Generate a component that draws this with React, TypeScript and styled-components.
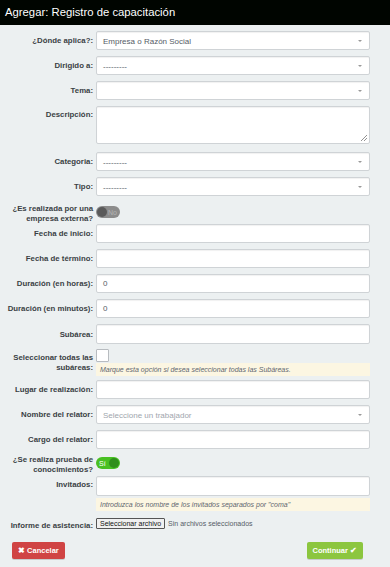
import React, { FC } from "react";
import styled, { createGlobalStyle } from "styled-components";

const GlobalStyle = createGlobalStyle`
  html, body {
    margin: 0;
    padding: 0;
    background: #ecf0f1;
    font-family: "Liberation Sans", Arial, sans-serif;
  }
`;

const StyledPage = styled.div`
  width: 390px;
  min-height: 567px;
  background: #ecf0f1;
`;

const StyledHeader = styled.div`
  height: 25px;
  background: #000500;
  color: #ffffff;
  font-size: 11.3px;
  line-height: 25px;
  padding: 0 5px;
`;

const StyledForm = styled.div`
  display: flex;
  flex-direction: column;
  padding: 6px 20px 0 3px;
`;

const StyledRow = styled.div<{ $gap?: number }>`
  display: grid;
  grid-template-columns: 90px 1fr;
  column-gap: 3px;
  margin-bottom: ${({ $gap }) => $gap ?? 6}px;
`;

const StyledLabel = styled.label<{ $pad?: number }>`
  font-size: 7.8px;
  font-weight: bold;
  color: #3a3f44;
  text-align: right;
  line-height: 10px;
  white-space: nowrap;
  padding-top: ${({ $pad }) => $pad ?? 5}px;
`;

const StyledField = styled.div`
  display: flex;
  flex-direction: column;
  align-items: flex-start;
`;

const StyledInput = styled.div<{ $h?: number }>`
  box-sizing: border-box;
  width: 100%;
  height: ${({ $h }) => $h ?? 19}px;
  background: #fff;
  border: 1px solid #cfd3d6;
  border-radius: 2px;
  box-shadow: inset 0 1px 1px rgba(0, 0, 0, 0.06);
  font-size: 8px;
  color: #555c66;
  padding: 0 6px;
  display: flex;
  align-items: center;
  position: relative;
`;

const StyledSelectText = styled.span<{ $muted?: boolean }>`
  flex: 1;
  color: ${({ $muted }) => ($muted ? "#a0a6ad" : "#555c66")};
  padding-top: 2px;
`;

const StyledArrow = styled.span`
  width: 0;
  height: 0;
  border-left: 2px solid transparent;
  border-right: 2px solid transparent;
  border-top: 2px solid #999;
  margin-right: 1px;
`;

const StyledResize = styled.svg`
  position: absolute;
  right: 2px;
  bottom: 2px;
`;

const StyledToggle = styled.div<{ $on?: boolean }>`
  width: 24px;
  height: 12px;
  border-radius: 6px;
  background: ${({ $on }) => ($on ? "#48c022" : "#8c8c8c")};
  display: flex;
  justify-content: space-between;
  align-items: center;
  padding: ${({ $on }) => ($on ? "0 1px 0 3px" : "0 3px 0 1px")};
  box-sizing: border-box;
  margin-top: 2px;
  font-size: 7px;
  color: ${({ $on }) => ($on ? "#ffffff" : "#b4b4b4")};
`;

const StyledKnob = styled.span<{ $on?: boolean }>`
  width: 10px;
  height: 10px;
  border-radius: 50%;
  background: ${({ $on }) => ($on ? "#2f8f1b" : "#5a5a5a")};
`;

const StyledCheckbox = styled.div`
  width: 11px;
  height: 11px;
  background: #fff;
  border: 1px solid #b8bcc0;
  border-radius: 1px;
`;

const StyledHelp = styled.div<{ $top?: number }>`
  box-sizing: border-box;
  width: 100%;
  background: #fcf6e2;
  font-size: 7px;
  font-style: italic;
  color: #5f6670;
  padding: 3px 4px;
  margin-top: ${({ $top }) => $top ?? 2}px;
`;

const StyledFileRow = styled.div`
  display: flex;
  align-items: center;
  gap: 3px;
  font-size: 7px;
  color: #555c66;
`;

const StyledFileButton = styled.span`
  border: 1px solid #555;
  border-radius: 1px;
  background: #f0f0f0;
  color: #111;
  padding: 1px 3px;
  font-size: 7px;
`;

const StyledActions = styled.div`
  display: flex;
  justify-content: space-between;
  padding: 11px 27px 0 12px;
`;

const StyledButton = styled.span<{ $kind: "danger" | "success" }>`
  height: 17px;
  box-sizing: border-box;
  display: inline-flex;
  align-items: center;
  gap: 2px;
  padding: 0 6px;
  border-radius: 2px;
  font-size: 7.5px;
  font-weight: bold;
  color: #fff;
  background: ${({ $kind }) => ($kind === "danger" ? "#d04444" : "#8cc63f")};
  box-shadow: 0 1px 0 rgba(0, 0, 0, 0.15);
`;

const Select: FC<{ text?: string; muted?: boolean }> = ({ text, muted }) => (
  <StyledInput>
    <StyledSelectText $muted={muted}>{text}</StyledSelectText>
    <StyledArrow />
  </StyledInput>
);

const Row: FC<{ label: React.ReactNode; pad?: number; gap?: number; children: React.ReactNode }> = ({
  label,
  pad,
  gap,
  children,
}) => (
  <StyledRow $gap={gap}>
    <StyledLabel $pad={pad}>{label}</StyledLabel>
    <StyledField>{children}</StyledField>
  </StyledRow>
);

export default function App() {
  return (
    <StyledPage>
      <GlobalStyle />
      <StyledHeader>Agregar: Registro de capacitación</StyledHeader>
      <StyledForm>
        <Row label="¿Dónde aplica?:">
          <Select text="Empresa o Razón Social" />
        </Row>
        <Row label="Dirigido a:">
          <Select text="---------" />
        </Row>
        <Row label="Tema:">
          <Select />
        </Row>
        <Row label="Descripción:" pad={4} gap={8}>
          <StyledInput $h={38}>
            <StyledResize width="6" height="6" viewBox="0 0 6 6">
              <path d="M0 6L6 0M3 6L6 3" stroke="#777" strokeWidth="0.8" />
            </StyledResize>
          </StyledInput>
        </Row>
        <Row label="Categoria:">
          <Select text="---------" />
        </Row>
        <Row label="Tipo:" gap={8}>
          <Select text="---------" />
        </Row>
        <Row label={<>¿Es realizada por una<br />empresa externa?</>} pad={0} gap={0}>
          <StyledToggle>
            <StyledKnob />
            No
          </StyledToggle>
        </Row>
        <Row label="Fecha de inicio:">
          <StyledInput />
        </Row>
        <Row label="Fecha de término:">
          <StyledInput />
        </Row>
        <Row label="Duración (en horas):">
          <StyledInput>0</StyledInput>
        </Row>
        <Row label="Duración (en minutos):">
          <StyledInput>0</StyledInput>
        </Row>
        <Row label="Subárea:" pad={6} gap={5}>
          <StyledInput $h={20} />
        </Row>
        <Row label={<>Seleccionar todas las<br />subáreas:</>} pad={4} gap={4}>
          <StyledCheckbox />
          <StyledHelp $top={1}>
            Marque esta opción si desea seleccionar todas las Subáreas.
          </StyledHelp>
        </Row>
        <Row label="Lugar de realización:">
          <StyledInput />
        </Row>
        <Row label="Nombre del relator:">
          <Select text="Seleccione un trabajador" muted />
        </Row>
        <Row label="Cargo del relator:" gap={6}>
          <StyledInput />
        </Row>
        <Row label={<>¿Se realiza prueba de<br />conocimientos?</>} pad={0} gap={1}>
          <StyledToggle $on>
            Sí
            <StyledKnob $on />
          </StyledToggle>
        </Row>
        <Row label="Invitados:" pad={4} gap={7}>
          <StyledInput $h={20} />
          <StyledHelp>Introduzca los nombre de los invitados separados por "coma"</StyledHelp>
        </Row>
        <Row label="Informe de asistencia:" pad={3} gap={0}>
          <StyledFileRow>
            <StyledFileButton>Seleccionar archivo</StyledFileButton>
            Sin archivos seleccionados
          </StyledFileRow>
        </Row>
      </StyledForm>
      <StyledActions>
        <StyledButton $kind="danger">✖ Cancelar</StyledButton>
        <StyledButton $kind="success">Continuar ✔</StyledButton>
      </StyledActions>
    </StyledPage>
  );
}
